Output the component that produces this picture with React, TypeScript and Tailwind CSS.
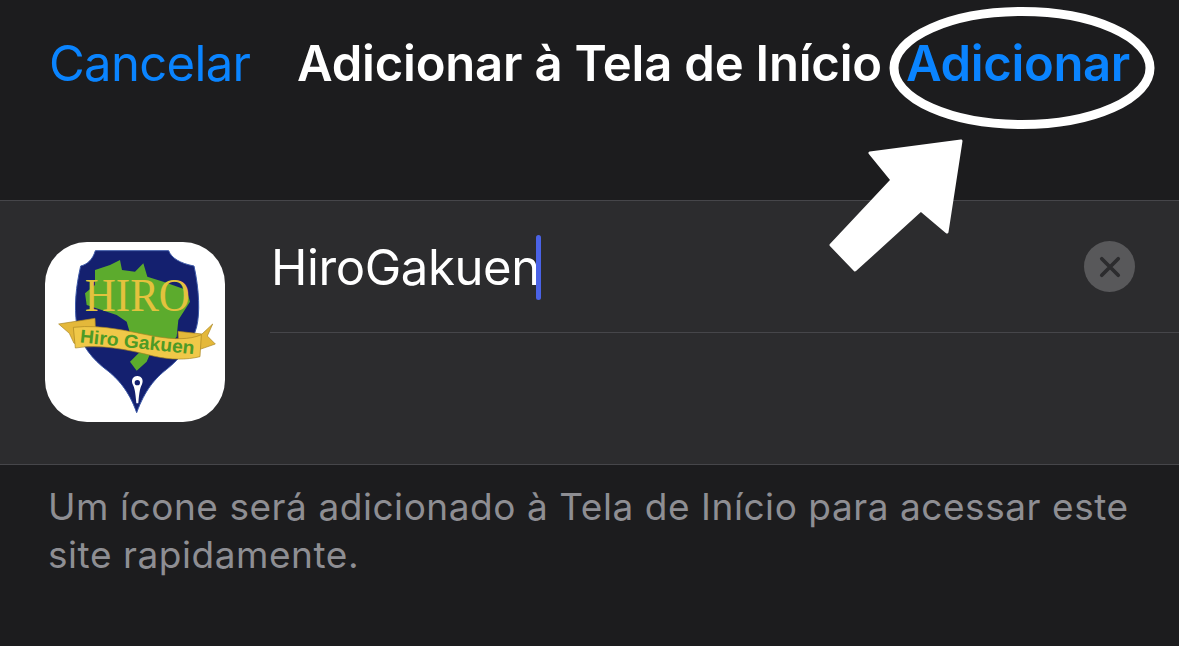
import React from "react";

const sans = "font-['Inter','Liberation_Sans',sans-serif]";

function AppIcon() {
  return (
    <svg viewBox="45 36 540 540" className="w-[180px] h-[180px] rounded-[42px] bg-white shrink-0">
      {/* shield */}
      <path d="M196 62 L416 62 C424 84 450 100 492 108 C508 180 510 250 500 290 C486 345 450 385 410 418 C375 445 345 480 320 548 C296 480 262 445 230 420 C190 390 150 345 140 285 C132 225 138 170 152 108 C170 104 188 90 196 62 Z" fill="#14206f" stroke="#3d5aa8" strokeWidth="3" />
      {/* map */}
      <path d="M195 120 L240 105 L270 90 L276 120 L315 125 L340 100 L352 140 L400 155 L470 180 L480 215 L445 270 L440 320 L405 360 L360 372 L350 395 L320 422 L300 395 L330 365 L300 310 L290 275 L260 255 L215 240 L170 225 L165 190 L195 165 Z" fill="#5cab2d" />
      {/* HIRO */}
      <text x="322" y="244" textAnchor="middle" fontFamily="'Liberation Serif', serif" fontSize="140" fill="#e3c23e" textLength="315" lengthAdjust="spacingAndGlyphs">HIRO</text>
      {/* ribbon tails */}
      <path d="M86 282 L195 265 L198 330 L132 340 L118 310 Z" fill="#e4b83a" stroke="#a8841f" strokeWidth="2" />
      <path d="M556 342 L510 358 L448 370 L444 304 L516 312 L548 282 L532 318 Z" fill="#e4b83a" stroke="#a8841f" strokeWidth="2" />
      {/* ribbon */}
      <path d="M130 292 C220 282 300 306 380 320 C430 328 480 330 514 314 L510 380 C470 390 420 390 370 378 C290 358 210 342 136 354 Z" fill="#f0c848" stroke="#a8841f" strokeWidth="2" />
      <text x="320" y="355" textAnchor="middle" fontFamily="'Liberation Sans', sans-serif" fontWeight="700" fontSize="56" fill="#4d9a26" textLength="345" lengthAdjust="spacingAndGlyphs" transform="rotate(6 320 355)">Hiro Gakuen</text>
      {/* nib hole */}
      <path d="M322 438 C336 438 342 452 335 465 C331 473 328 482 325 520 L319 520 C316 482 313 473 309 465 C302 452 308 438 322 438 Z" fill="#ffffff" />
      <circle cx="322" cy="458" r="8" fill="#14206f" />
    </svg>
  );
}

export default function App() {
  return (
    <div className={`relative w-[1179px] h-[646px] overflow-hidden bg-[#1c1c1e] ${sans}`}>
      <header className="h-[200px] pt-[33px] pl-[49px] flex items-start text-[49px] leading-[62px]">
        <span className="w-[248px] text-[#0a84ff] tracking-[-0.67px]">Cancelar</span>
        <span className="w-[609px] font-semibold text-white tracking-[-0.2px]">Adicionar à Tela de Início</span>
        <span className="font-semibold text-[#0a84ff] tracking-[-0.35px]">Adicionar</span>
      </header>

      <section className="h-[265px] bg-[#2c2c2e] border-y border-[#46464a] pl-[45px] pt-[41px] flex items-start">
        <AppIcon />
        <div className="flex-1 ml-[45px] -mt-[41px]">
          <div className="h-[132px] border-b border-[#46464a] flex items-center justify-between pr-[44px]">
            <div className="flex items-center pl-[1px] pt-[2px]">
              <span className="text-[49px] leading-[62px] text-white tracking-[-0.4px]">HiroGakuen</span>
              <span className="w-[5px] h-[65px] bg-[#4a62e6] rounded-sm -ml-[4px]" />
            </div>
            <div className="w-[51px] h-[51px] rounded-full bg-[#58585a] flex items-center justify-center">
              <svg viewBox="0 0 24 24" className="w-[22px] h-[22px]" fill="none" stroke="#2c2c2e" strokeWidth="4" strokeLinecap="round">
                <path d="M3 3 L21 21 M21 3 L3 21" />
              </svg>
            </div>
          </div>
        </div>
      </section>

      <p className="pl-[48px] pr-[40px] pt-[18px] text-[37px] leading-[48px] tracking-[0.55px] text-[#8e8e93]">
        Um ícone será adicionado à Tela de Início para acessar este site rapidamente.
      </p>

      <svg className="absolute left-0 top-0 pointer-events-none" width="1179" height="646">
        <ellipse cx="1022" cy="68" rx="128" ry="56.5" fill="none" stroke="#ffffff" strokeWidth="9" />
        <path d="M961 141 L947 232 L921 210 L855 270 L831 245 L892 180 L870 153 Z" fill="#ffffff" stroke="#ffffff" strokeWidth="3" strokeLinejoin="round" />
      </svg>
    </div>
  );
}
